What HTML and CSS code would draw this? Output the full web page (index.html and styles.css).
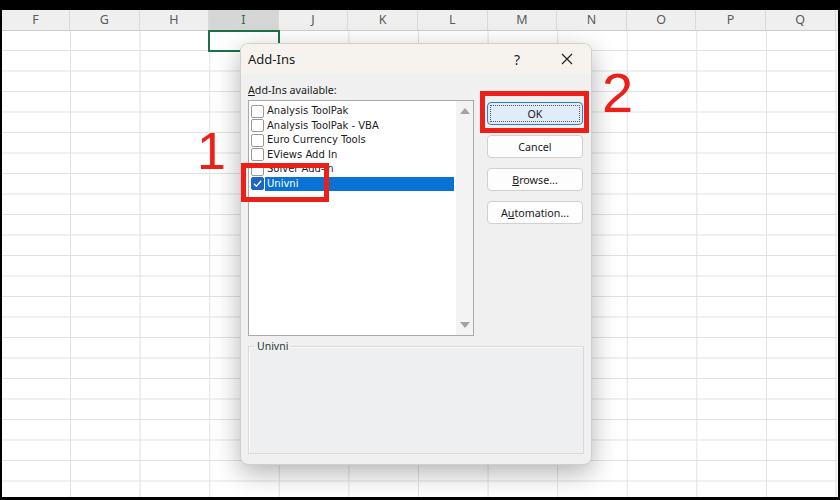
FILE: index.html
```html
<!DOCTYPE html>
<html lang="en">
<head>
    <meta charset="UTF-8">
    <title>Add-Ins</title>
    <link rel="stylesheet" href="styles.css">
</head>
<body>
    <div class="screen">
        <div class="sheet">
            <div class="cols">
                <span class="col first">F</span>
                <span class="col">G</span>
                <span class="col">H</span>
                <span class="col active">I</span>
                <span class="col">J</span>
                <span class="col">K</span>
                <span class="col">L</span>
                <span class="col">M</span>
                <span class="col">N</span>
                <span class="col">O</span>
                <span class="col">P</span>
                <span class="col">Q</span>
            </div>
            <div class="grid"></div>
            <div class="cell-select"></div>
        </div>

        <div class="dialog">
            <div class="titlebar">
                <span class="title">Add-Ins</span>
                <span class="title-btn">?</span>
                <span class="title-btn">
                    <svg width="12" height="12" viewBox="0 0 12 12"><path d="M1 1 L11 11 M11 1 L1 11" stroke="#222" stroke-width="1.2" fill="none"/></svg>
                </span>
            </div>
            <div class="dialog-body">
                <div class="main">
                    <div class="left">
                        <div class="label"><u>A</u>dd-Ins available:</div>
                        <div class="list">
                            <div class="items">
                                <div class="item"><span class="check"></span><span class="name">Analysis ToolPak</span></div>
                                <div class="item"><span class="check"></span><span class="name">Analysis ToolPak - VBA</span></div>
                                <div class="item"><span class="check"></span><span class="name">Euro Currency Tools</span></div>
                                <div class="item"><span class="check"></span><span class="name">EViews Add In</span></div>
                                <div class="item"><span class="check"></span><span class="name">Solver Add-in</span></div>
                                <div class="item selected">
                                    <span class="check on">
                                        <svg width="11" height="11" viewBox="0 0 11 11"><path d="M2 5.8 L4.4 8.2 L9.2 2.8" stroke="#fff" stroke-width="1.3" fill="none"/></svg>
                                    </span>
                                    <span class="name">Univni</span>
                                </div>
                            </div>
                            <div class="scroll">
                                <span class="arrow up"></span>
                                <span class="arrow down"></span>
                            </div>
                        </div>
                    </div>
                    <div class="buttons">
                        <button class="btn default"><span class="focus">OK</span></button>
                        <button class="btn">Cancel</button>
                        <button class="btn"><u>B</u>rowse...</button>
                        <button class="btn">A<u>u</u>tomation...</button>
                    </div>
                </div>
                <fieldset class="group">
                    <legend>Univni</legend>
                </fieldset>
            </div>
        </div>

        <div class="mark mark-1"></div>
        <div class="mark mark-2"></div>
        <div class="step step-1">1</div>
        <div class="step step-2">2</div>
    </div>
</body>
</html>
```

FILE: styles.css
```css
body {
    margin: 0;
    background: #000;
    font-family: "Noto Sans", sans-serif;
}

.screen {
    position: relative;
    width: 840px;
    height: 500px;
    box-sizing: border-box;
    padding: 10px 2px 3px 2px;
    background: #000;
    overflow: hidden;
}

.sheet {
    position: relative;
    height: 100%;
    background: #fff;
    overflow: hidden;
}

.cols {
    display: flex;
    height: 20px;
    background: #efefef;
    border-bottom: 1px solid #cdcdcd;
}

.col {
    flex: 0 0 69.6px;
    box-sizing: border-box;
    border-right: 1px solid #d9d9d9;
    text-align: center;
    line-height: 20px;
    font-size: 12.5px;
    color: #5a5a5a;
}

.col.first {
    flex-basis: 68px;
}

.col.active {
    background: #d6d6d6;
    color: #1e7145;
}

.grid {
    height: calc(100% - 21px);
    background-image:
        linear-gradient(to right, #e1e1e1 1px, transparent 1px),
        linear-gradient(to bottom, #e1e1e1 1px, transparent 1px);
    background-size: 69.6px 100%, 100% 20.5px;
    background-position: 68px 0, 0 19px;
}

.cell-select {
    position: absolute;
    left: 206px;
    top: 20px;
    width: 72px;
    height: 22px;
    box-sizing: border-box;
    border: 2px solid #1e7145;
}

/* dialog */
.dialog {
    position: absolute;
    left: 240px;
    top: 43px;
    width: 352px;
    height: 422px;
    box-sizing: border-box;
    background: #f0f0f0;
    border: 1px solid #cfcfcf;
    border-radius: 8px;
    box-shadow: 0 8px 26px rgba(0, 0, 0, 0.3);
    overflow: hidden;
    color: #1b1b1b;
}

.titlebar {
    display: flex;
    align-items: center;
    height: 30px;
    background: #f6f3ee;
    padding-left: 7px;
}

.title {
    flex: 1;
    font-size: 13px;
}

.title-btn {
    width: 46px;
    display: flex;
    justify-content: center;
    font-size: 14px;
}

.title-btn + .title-btn {
    margin-left: 4px;
    margin-right: 1px;
}

.dialog-body {
    padding: 0 7px;
}

.main {
    display: flex;
    gap: 13px;
}

.left {
    width: 226px;
    padding-top: 9px;
}

.label {
    font-size: 10.7px;
    height: 17px;
}

.list {
    display: flex;
    height: 236px;
    box-sizing: border-box;
    border: 1px solid #a9a9a9;
    background: #fff;
}

.items {
    flex: 1;
    padding-top: 3px;
}

.item {
    display: flex;
    align-items: center;
    height: 14.5px;
    font-family: "DejaVu Sans", sans-serif;
    font-size: 10px;
}

.check {
    width: 13px;
    height: 13px;
    margin-left: 2px;
    box-sizing: border-box;
    border: 1px solid #999;
    border-radius: 2px;
    background: #fff;
    display: flex;
    align-items: center;
    justify-content: center;
}

.check.on {
    background: #1d66c2;
    border-color: #1d66c2;
}

.name {
    flex: 1;
    margin-left: 1px;
    padding-left: 2px;
    line-height: 14px;
}

.selected .name {
    background: #0a72d4;
    color: #fff;
    margin-right: 2px;
}

.scroll {
    width: 17px;
    background: #f3f3f3;
    display: flex;
    flex-direction: column;
    justify-content: space-between;
    align-items: center;
    padding: 7px 0;
}

.arrow {
    width: 0;
    height: 0;
    border-left: 5px solid transparent;
    border-right: 5px solid transparent;
}

.arrow.up {
    border-bottom: 6px solid #a3a3a3;
}

.arrow.down {
    border-top: 6px solid #a3a3a3;
}

.buttons {
    padding-top: 28px;
    display: flex;
    flex-direction: column;
    gap: 10px;
}

.btn {
    width: 96px;
    height: 23px;
    padding: 0;
    font-family: "Noto Sans", sans-serif;
    font-size: 10.7px;
    color: #1b1b1b;
    background: #fdfdfd;
    border: 1px solid #d0d0d0;
    border-radius: 4px;
}

.btn.default {
    background: #e0ecf7;
    border-color: #2f7bd0;
    padding: 2px;
}

.focus {
    display: block;
    height: 100%;
    box-sizing: border-box;
    border: 1px dotted #555;
    line-height: 17px;
}

.group {
    margin: 4px 0 0 0;
    padding: 0;
    height: 114px;
    box-sizing: border-box;
    border: 1px solid #dadada;
    box-shadow: inset 1px 1px 0 #fafafa;
    background: #eeeff0;
}

.group legend {
    margin-left: 6px;
    padding: 0 2px;
    font-size: 10.5px;
    line-height: 12px;
    color: #243a33;
}

/* annotations */
.mark {
    position: absolute;
    box-sizing: border-box;
    border: 5px solid #eb2119;
}

.mark-1 {
    left: 241px;
    top: 163px;
    width: 88px;
    height: 39px;
}

.mark-2 {
    left: 480px;
    top: 91px;
    width: 109px;
    height: 42px;
}

.step {
    position: absolute;
    font-family: "Liberation Sans", sans-serif;
    color: #eb2119;
}

.step-1 {
    left: 197px;
    top: 125px;
    font-size: 52px;
    line-height: 52px;
}

.step-2 {
    left: 602px;
    top: 65px;
    font-size: 56px;
    line-height: 56px;
}
```
